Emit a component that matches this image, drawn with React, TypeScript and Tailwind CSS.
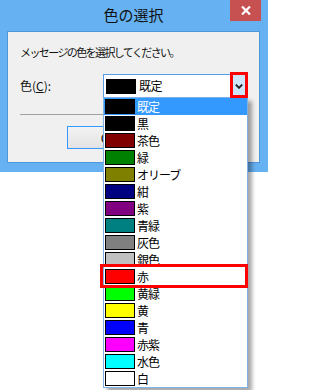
import React from 'react';

const items: { name: string; sw: string }[] = [
  { name: '既定', sw: 'bg-[#000000]' },
  { name: '黒', sw: 'bg-[#000000]' },
  { name: '茶色', sw: 'bg-[#800000]' },
  { name: '緑', sw: 'bg-[#008000]' },
  { name: 'オリーブ', sw: 'bg-[#808000]' },
  { name: '紺', sw: 'bg-[#000080]' },
  { name: '紫', sw: 'bg-[#800080]' },
  { name: '青緑', sw: 'bg-[#008080]' },
  { name: '灰色', sw: 'bg-[#808080]' },
  { name: '銀色', sw: 'bg-[#c0c0c0]' },
  { name: '赤', sw: 'bg-[#ff0000]' },
  { name: '黄緑', sw: 'bg-[#00ff00]' },
  { name: '黄', sw: 'bg-[#ffff00]' },
  { name: '青', sw: 'bg-[#0000ff]' },
  { name: '赤紫', sw: 'bg-[#ff00ff]' },
  { name: '水色', sw: 'bg-[#00ffff]' },
  { name: '白', sw: 'bg-[#ffffff]' },
];

export default function App() {
  return (
    <div className="relative w-[268px] h-[390px] bg-white overflow-hidden font-['Noto_Sans_CJK_JP','Noto_Sans',sans-serif] text-black">
      {/* Window */}
      <div className="flex flex-col w-[268px] h-[172px] bg-[#66b1f2] pl-[7px] pr-[8px] pb-[9px]">
        {/* Title bar */}
        <div className="relative flex h-[31px] shrink-0 items-center justify-center">
          <span className="text-[15px] leading-[20px] text-[#111] -mt-[2px]">色の選択</span>
          <div className="absolute right-[-1px] top-0 flex h-[21px] w-[31px] items-center justify-center bg-[#c75050]">
            <svg width="10" height="9" viewBox="0 0 10 9">
              <path d="M1 0.5 L9 8.5 M9 0.5 L1 8.5" stroke="#ffffff" strokeWidth="2.2" />
            </svg>
          </div>
        </div>
        {/* Client area */}
        <div className="flex flex-1 flex-col border border-[#4f97dd] bg-[#f0f0f0] pl-[12px] pr-[11px]">
          <div className="mt-[12px] h-[16px] text-[11px] leading-[16px] tracking-[-1.6px] whitespace-nowrap text-[#111]">
            メッセージの色を選択してください。
          </div>
          <div className="mt-[14px] flex h-[24px] items-center">
            <span className="w-[83px] text-[12px] leading-[16px] text-[#111]">
              色(<span className="underline">C</span>):
            </span>
            <div className="flex h-[24px] w-[145px] items-stretch border border-[#569de5] bg-white">
              <div className="flex flex-1 items-center pl-[2px]">
                <div className="h-[15px] w-[30px] border border-black bg-black" />
                <span className="ml-[3px] text-[12px] leading-[16px] tracking-[-0.6px]">既定</span>
              </div>
              <div className="flex w-[16px] items-center justify-center bg-[#cfe5fa]">
                <svg width="8" height="5" viewBox="0 0 8 5">
                  <path d="M0.8 0.6 L4 3.8 L7.2 0.6" fill="none" stroke="#1a1a1a" strokeWidth="1.8" />
                </svg>
              </div>
            </div>
          </div>
          <div className="mt-[16px] h-px w-[228px] bg-[#a0a0a0]" />
          <div className="mt-[11px] flex h-[23px] gap-[13px] pl-[47px]">
            <button className="h-[23px] w-[85px] border border-[#3399ff] bg-gradient-to-b from-[#f3f3f3] to-[#e3e3e3] text-[12px] leading-[16px]">
              OK
            </button>
            <button className="h-[23px] w-[85px] border border-[#acacac] bg-gradient-to-b from-[#f3f3f3] to-[#e3e3e3] text-[12px] leading-[16px]">
              キャンセル
            </button>
          </div>
        </div>
      </div>

      {/* Dropdown list (popup) */}
      <div className="absolute left-[103px] top-[97px] w-[145px] border border-[#7fb0e6] bg-white shadow-[4px_4px_4px_rgba(0,0,0,0.35)]">
        {items.map((it, i) => (
          <div
            key={it.name + i}
            className={
              i === 0
                ? 'flex h-[17px] items-center bg-[#3399ff] text-white'
                : 'flex h-[17px] items-center text-black'
            }
          >
            <div className={'ml-[1px] h-[15px] w-[30px] border border-black ' + it.sw} />
            <span className="ml-[2px] text-[12px] leading-[17px] tracking-[-1px]">{it.name}</span>
          </div>
        ))}
      </div>

      {/* Red highlight boxes */}
      <div className="absolute left-[230px] top-[72px] h-[26px] w-[18px] border-[3px] border-[#ff0000]" />
      <div className="absolute left-[100px] top-[264px] h-[24px] w-[148px] border-[3px] border-[#ff0000]" />
    </div>
  );
}
